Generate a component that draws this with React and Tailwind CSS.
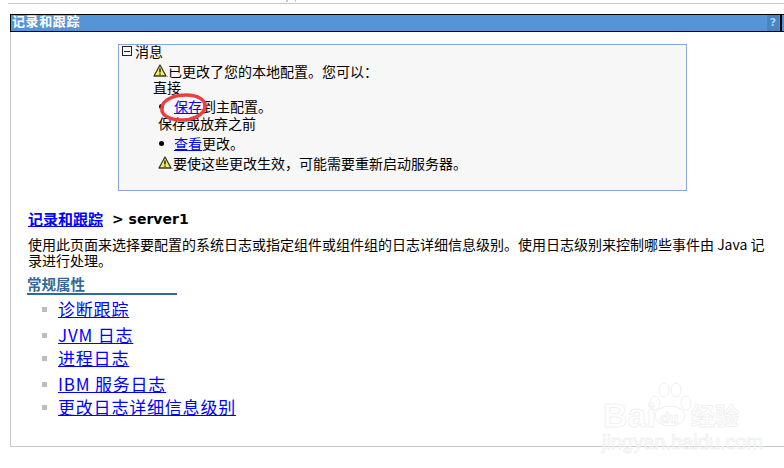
import React from 'react';

function Warn() {
  return (
    <svg width="15" height="14" viewBox="0 0 15 14" className="shrink-0">
      <path d="M7 1 L13 12 L1 12 Z" fill="#f6ee6a" stroke="#3a3a20" strokeWidth="1.3" strokeLinejoin="round" />
      <path d="M7 4.5 V8.5 M7 9.6 V10.8" stroke="#111" strokeWidth="1.4" />
      <path d="M13 12.5 H15" stroke="#aaa" strokeWidth="1" />
    </svg>
  );
}

function Bullet() {
  return <span className="w-[5px] h-[5px] rounded-full bg-black shrink-0 ml-[1px] mr-[10px]"></span>;
}

const links = [
  { label: '诊断跟踪', mt: 'mt-0' },
  { label: 'JVM 日志', mt: 'mt-[4px]' },
  { label: '进程日志', mt: 'mt-[1px]' },
  { label: 'IBM 服务日志', mt: 'mt-[4px]' },
  { label: '更改日志详细信息级别', mt: 'mt-[1px]' },
];

export default function App() {
  return (
    <div className="relative w-[784px] h-[468px] overflow-hidden bg-white font-['Noto_Sans_CJK_SC','Noto_Sans',sans-serif] text-[14px] text-black">
      <div className="h-[4px] ml-[8px] border-b border-[#c8c8c8]"></div>

      <div className="mt-[10px] ml-[10px] h-[433px] border-l border-b border-[#c8c8c8]">
        <div className="-ml-px flex h-[18px] border border-black border-r-0 bg-[#5395d6]">
          <div className="flex-1 pl-[1px] text-[13px] tracking-[0.6px] leading-[12px] font-bold text-white">记录和跟踪</div>
          <div className="w-[12px] h-full text-center bg-[#4785c4] text-[11px] leading-[15px] font-bold text-[#b8d2ee] font-['DejaVu_Sans',sans-serif]">?</div>
          <div className="w-[2px] ml-[1px] bg-black"></div>
          <div className="w-[2px]"></div>
        </div>

        <div className="ml-[107px] mt-[12px] w-[569px] h-[147px] border border-[#86a5dd] bg-[#f7f7f7] pl-[3px] leading-[16px]">
          <div className="flex items-center h-[12px]">
            <span className="flex items-center justify-center w-[10px] h-[10px] border border-[#222] mr-[3px]">
              <span className="w-[6px] h-px bg-[#222]"></span>
            </span>
            <span>消息</span>
          </div>
          <div className="pl-[31px] pt-[6px]">
            <div className="flex items-center h-[16px]"><Warn /><span>已更改了您的本地配置。您可以：</span></div>
            <div className="h-[16px]">直接</div>
            <div className="flex items-center h-[16px] mt-[3px] pl-[5px]">
              <Bullet />
              <span><a href="#" className="text-[#0000ff] underline">保存</a>到主配置。</span>
            </div>
            <div className="pl-[5px] h-[16px] mt-[1px]">保存或放弃之前</div>
            <div className="flex items-center h-[16px] mt-[4px] pl-[5px]">
              <Bullet />
              <a href="#" className="text-[#0000ff] underline">查看</a><span>更改。</span>
            </div>
            <div className="flex items-center h-[16px] mt-[4px] pl-[5px]"><Warn /><span>要使这些更改生效，可能需要重新启动服务器。</span></div>
          </div>
        </div>

        <div className="ml-[17px] mt-[19px] flex items-center h-[18px] font-bold text-[15px]">
          <a href="#" className="text-[#0000ff] underline">记录和跟踪</a>
          <span className="ml-[9px] text-[14px] font-['DejaVu_Sans',sans-serif]">&gt; server1</span>
        </div>

        <p className="ml-[17px] mt-[8px] w-[750px] text-[14px] leading-[16px]">
          使用此页面来选择要配置的系统日志或指定组件或组件组的日志详细信息级别。使用日志级别来控制哪些事件由 Java 记录进行处理。
        </p>

        <div className="ml-[16px] mt-[7px] w-[150px] h-[20px] border-b-2 border-[#34689a] text-[14.5px] leading-[17px] font-bold text-[#34689a]">常规属性</div>

        <ul className="ml-[31px] mt-[3px] text-[17px]">
          {links.map((l) => (
            <li key={l.label} className={`flex items-center h-[22px] ${l.mt}`}>
              <span className="w-[5px] h-[5px] bg-[#bdbdbd] mr-[11px] shrink-0"></span>
              <a href="#" className="text-[#0000ff] underline tracking-[0.8px] leading-[20px]">{l.label}</a>
            </li>
          ))}
        </ul>
      </div>

      {/* bits of the cut off page at the top */}
      <div className="absolute left-[286px] top-0 w-[2px] h-[2px] bg-[#c8c8c8]"></div>
      <div className="absolute left-[295px] top-0 w-[1px] h-[2px] bg-[#c8c8c8]"></div>

      {/* red hand-drawn circle round the save link */}
      <svg className="absolute left-[158px] top-[92px]" width="52" height="32" viewBox="0 0 52 32">
        <path d="M4 16 C4 8 16 3 28 3 C40 3 48 8 47 15 C46 23 34 29 21 28 C10 27 3 23 4 16 Z" fill="none" stroke="#e94040" strokeWidth="3.5" />
      </svg>

      {/* watermark */}
      <div className="absolute left-[600px] top-[380px] w-[180px] h-[72px] text-transparent font-bold [-webkit-text-stroke:1px_#f1f1f1]">
        <span className="absolute left-[3px] top-[18px] text-[34px] leading-[34px] font-['Liberation_Sans',sans-serif]">Bai</span>
        <svg className="absolute left-[48px] top-[2px]" width="44" height="46" viewBox="0 0 44 46">
          <g fill="none" stroke="#efefef" strokeWidth="1">
            <ellipse cx="22" cy="34" rx="15" ry="10" />
            <ellipse cx="7" cy="21" rx="5" ry="7" />
            <ellipse cx="16" cy="8" rx="5" ry="7" />
            <ellipse cx="28" cy="8" rx="5" ry="7" />
            <ellipse cx="38" cy="21" rx="5" ry="7" />
          </g>
        </svg>
        <span className="absolute left-[60px] top-[28px] text-[15px] leading-[20px] font-['Liberation_Sans',sans-serif]">du</span>
        <span className="absolute left-[91px] top-[21px] text-[24px] leading-[28px]">经验</span>
        <span className="absolute left-[2px] top-[52px] text-[20px] leading-[20px] font-normal font-['Liberation_Sans',sans-serif]">jingyan.baidu.com</span>
      </div>
    </div>
  );
}
